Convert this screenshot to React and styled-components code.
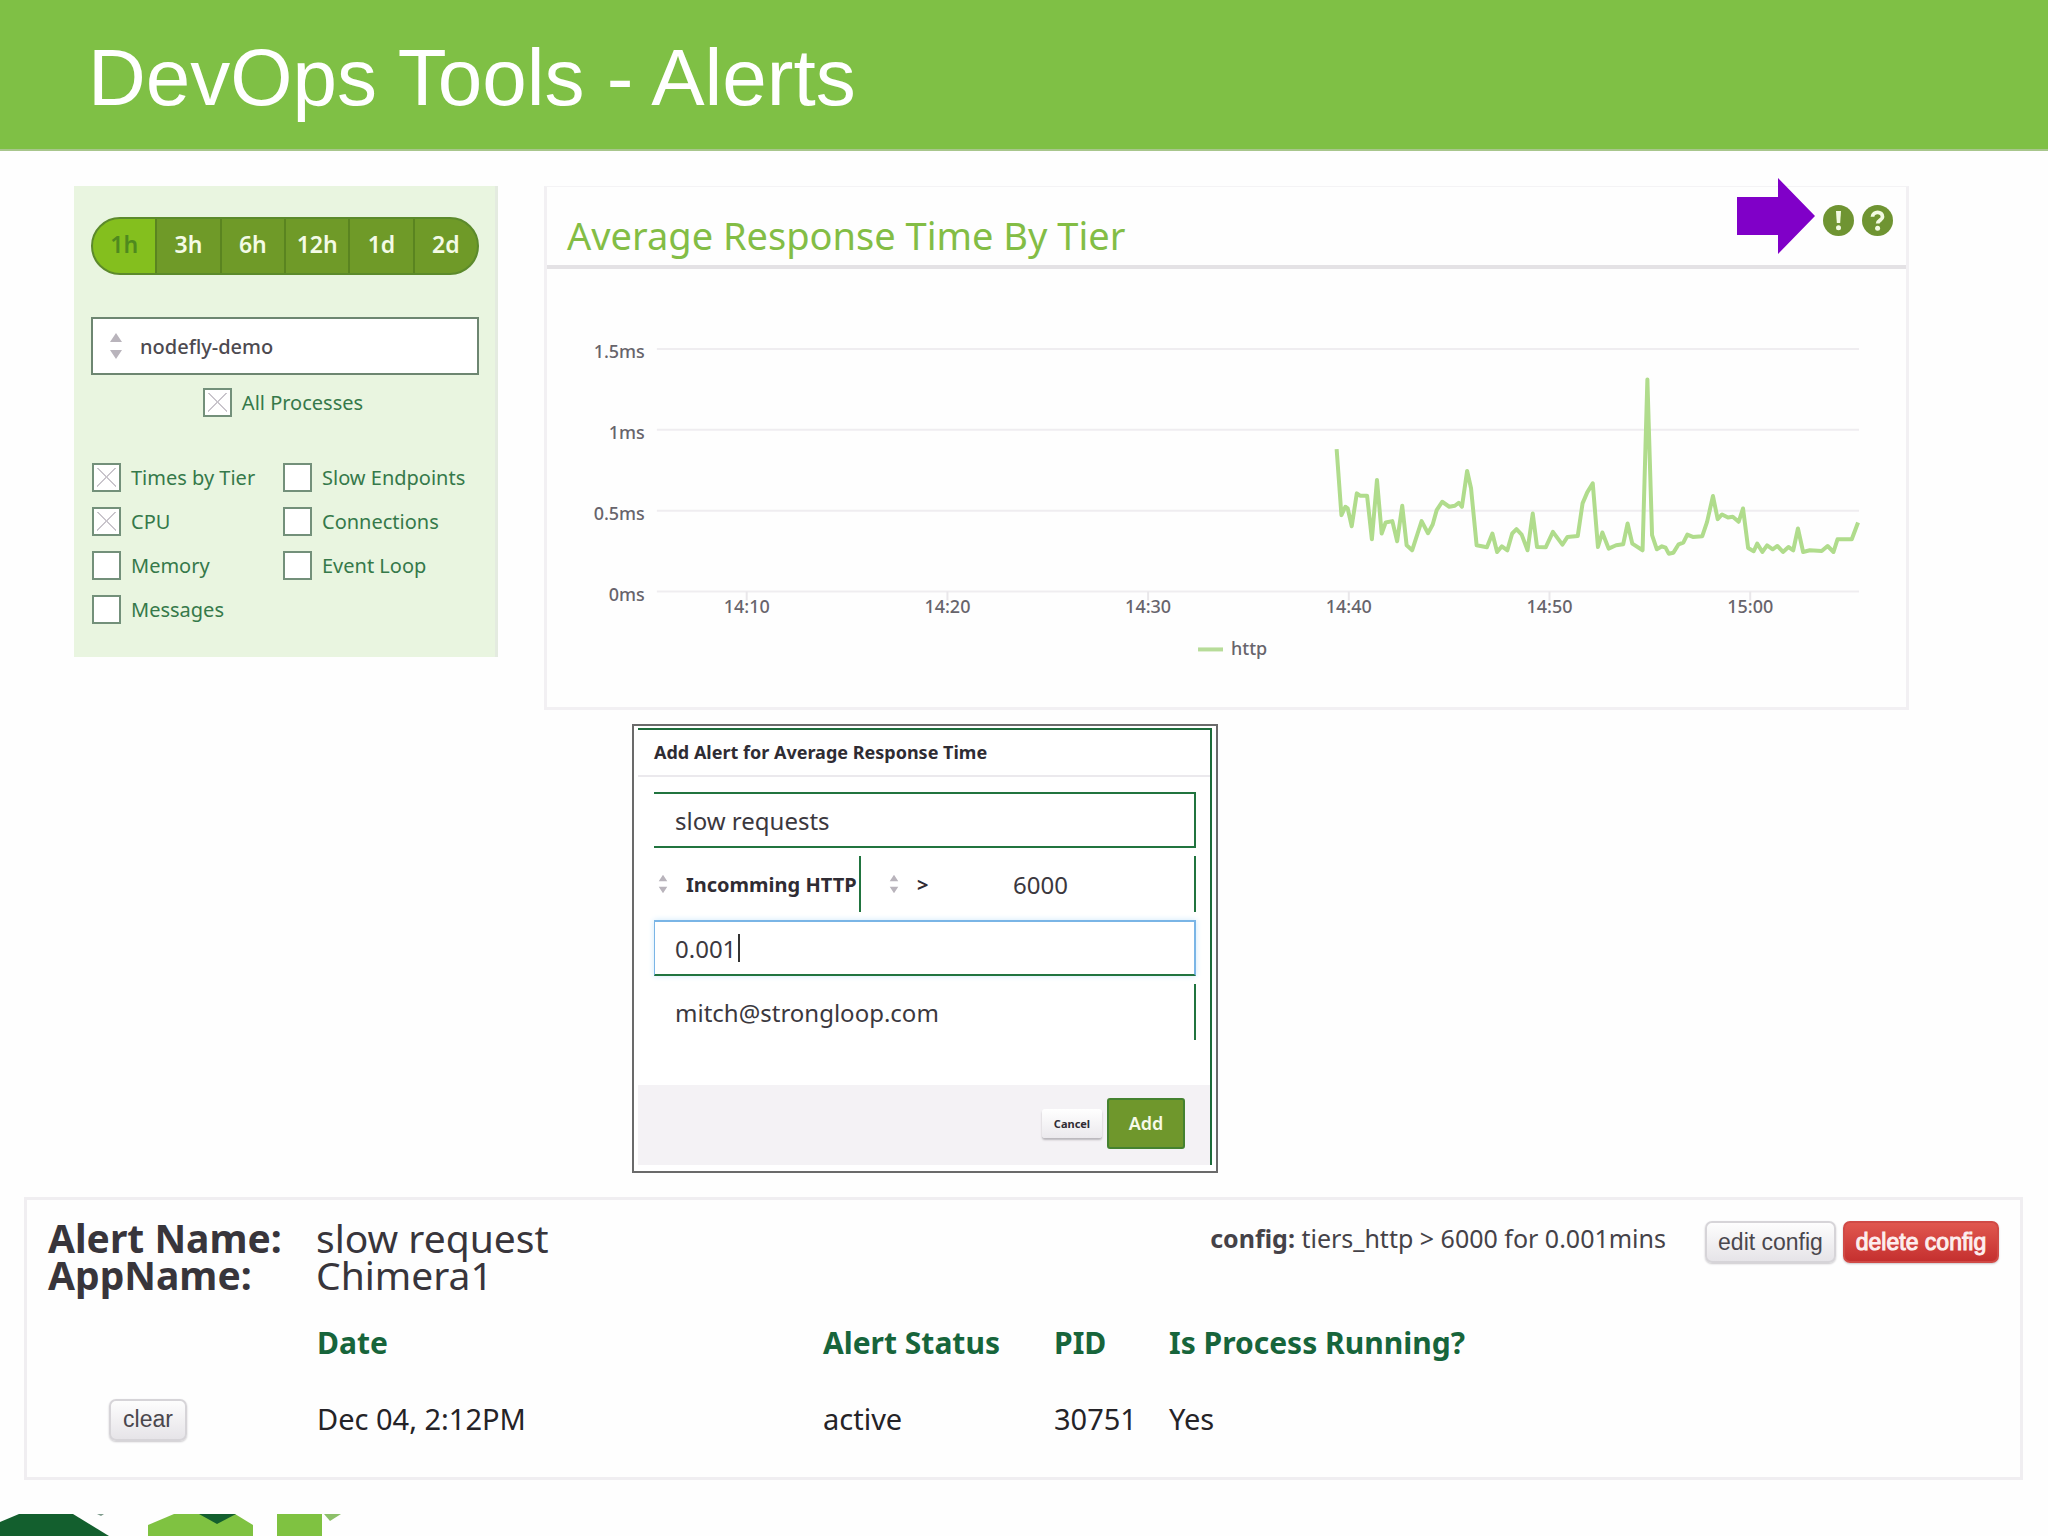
import React from "react";
import styled, { createGlobalStyle, css } from "styled-components";

const ui = '"Noto Sans", "Open Sans", sans-serif';
const plain = '"Liberation Sans", Arial, sans-serif';

const GlobalStyle = createGlobalStyle`
  *, *::before, *::after { box-sizing: border-box; }
  body {
    margin: 0;
    background: #fefefe;
    color: #3d3d3f;
    font-family: ${ui};
  }
  button, input, select { font-family: inherit; margin: 0; }
`;

const Page = styled.div`
  display: flex;
  flex-direction: column;
  min-height: 100vh;
`;

const Banner = styled.header`
  padding: 34px 88px 27px;
  background: #7fc045;
  border-bottom: 2px solid #a8c68c;
`;

const BannerTitle = styled.h1`
  margin: 0;
  font: 400 80px/88px ${plain};
  color: #fff;
`;

const Content = styled.main`
  display: flex;
  flex-direction: column;
  gap: 14px;
  padding: 35px 25px 0 24px;
`;

const Dashboard = styled.section`
  display: flex;
  align-items: flex-start;
  gap: 46px;
  padding: 0 114px 0 50px;
`;

/* Sidebar */

const Sidebar = styled.aside`
  flex: 0 0 424px;
  min-height: 471px;
  padding: 31px 16px 31px 17px;
  background: #e9f5e0;
  border-right: 3px solid #e4ebe0;
`;

const RangeGroup = styled.div`
  display: flex;
  height: 58px;
  overflow: hidden;
  border: 2px solid #5c8a2c;
  border-radius: 29px;
  background: #6f9a28;
`;

const RangeButton = styled.button`
  flex: 1;
  padding: 0 0 4px;
  border: 0;
  border-left: 2px solid #5a8420;
  background: ${(p) => (p.$active ? "#84bf1e" : "transparent")};
  color: ${(p) => (p.$active ? "#4f8a1e" : "#f4fbe6")};
  font-size: 23px;
  font-weight: 600;

  &:first-child { border-left: 0; }
`;

const SelectWrap = styled.div`
  position: relative;
  display: flex;
`;

const SpinIcon = styled.svg`
  position: absolute;
  left: ${(p) => p.$left}px;
  top: 50%;
  width: ${(p) => p.$width}px;
  transform: translateY(-50%);
  fill: #b9b4bc;
  pointer-events: none;
`;

const SidebarSelect = styled.select`
  width: 100%;
  height: 58px;
  padding: 0 0 0 47px;
  appearance: none;
  border: 2px solid #6d8671;
  border-radius: 0;
  background: #fff;
  color: #4d4a50;
  font-size: 20px;
  font-weight: 500;
`;

const SelectSpacer = styled.div`
  margin: 42px 0 13px;
`;

const CheckLabel = styled.label`
  display: flex;
  align-items: center;
  gap: 10px;
  height: 29px;
  color: #35794a;
  font-size: 20px;
  white-space: nowrap;
`;

const Checkbox = styled.input`
  appearance: none;
  flex: none;
  width: 29px;
  height: 29px;
  margin: 0;
  border: 2px solid #73907a;
  background: #fff;

  &:checked {
    background:
      linear-gradient(45deg, transparent 48%, #c9c5cc 48%, #c9c5cc 53%, transparent 53%) center / 19px 19px no-repeat,
      linear-gradient(-45deg, transparent 48%, #c9c5cc 48%, #c9c5cc 53%, transparent 53%) center / 19px 19px no-repeat,
      #fff;
  }
`;

const AllProcesses = styled.div`
  display: flex;
  justify-content: center;
  padding-right: 4px;
`;

const MetricColumns = styled.div`
  display: grid;
  grid-template-columns: 191px 1fr;
  margin-top: 46px;
  padding-left: 1px;
`;

const MetricColumn = styled.div`
  display: flex;
  flex-direction: column;
  gap: 15px;
`;

/* Chart panel */

const ChartPanel = styled.article`
  flex: 1;
  min-width: 0;
  border: 3px solid #f2f0f3;
  border-top: 1px solid #f4f3f5;
`;

const ChartHeader = styled.header`
  display: flex;
  align-items: center;
  justify-content: space-between;
  height: 82px;
  padding: 0 13px 0 20px;
  border-bottom: 4px solid #e4e2e5;
`;

const ChartTitle = styled.h2`
  margin: 18px 0 0;
  color: #83bd45;
  font-size: 38px;
  font-weight: 400;
  line-height: 48px;
`;

const HeaderTools = styled.div`
  display: flex;
  align-items: center;
  gap: 8px;
  margin-top: -20px;
`;

const Arrow = styled.svg`
  width: 78px;
  height: 76px;
`;

const IconButton = styled.button`
  display: flex;
  margin-top: 9px;
  padding: 0;
  border: 0;
  background: none;

  svg { width: 31px; height: 31px; }
`;

const ChartSvg = styled.svg`
  display: block;
  width: 100%;
  height: auto;

  text {
    font: 500 18px ${ui};
    fill: #67646b;
  }
`;

/* Alert dialog */

const Dialog = styled.form`
  width: 586px;
  margin: 0 0 10px 608px;
  padding: 2px 4px 6px;
  border: 2px solid #6a6a6a;
  background: #fff;
`;

const DialogBody = styled.div`
  display: flex;
  flex-direction: column;
  border-top: 2px solid #1d6b3a;
  border-right: 2px solid #1d6b3a;
`;

const DialogTitle = styled.h3`
  margin: 0;
  padding: 0 16px;
  border-bottom: 2px solid #ebe9ed;
  color: #2f2c33;
  font-size: 18px;
  font-weight: 700;
  line-height: 45px;
`;

const Fields = styled.div`
  display: flex;
  flex-direction: column;
  gap: 8px;
  padding: 15px 14px 45px 16px;
`;

const fieldText = css`
  color: #3b383e;
  font-size: 24px;
`;

const Field = styled.input`
  ${fieldText}
  width: 100%;
  height: 56px;
  padding: 0 21px;
  border: solid #21743f;
  border-width: ${(p) => (p.$rightOnly ? "0 2px 0 0" : "2px 2px 2px 0")};
  background: transparent;
  outline: 0;
`;

const FocusedField = styled.div`
  display: flex;
  align-items: center;
  height: 56px;
  padding-left: 20px;
  border: 2px solid #7ab5e6;
  border-left-width: 1px;
  border-bottom-color: #21743f;
  box-shadow: 0 0 6px #cfe9fb;
`;

const FocusedInput = styled.input`
  ${fieldText}
  width: 63px;
  padding: 0;
  border: 0;
  background: transparent;
  outline: 0;
`;

const Caret = styled.span`
  width: 2px;
  height: 28px;
  background: #333;
`;

const ConditionRow = styled.div`
  display: grid;
  grid-template-columns: 207px 131px 1fr;
`;

const FieldSelect = styled.select`
  width: 100%;
  height: 56px;
  padding: 0 0 0 ${(p) => p.$indent}px;
  appearance: none;
  border: 0;
  border-right: ${(p) => (p.$divider ? "2px solid #21743f" : "0")};
  border-radius: 0;
  background: transparent;
  color: #2f2c33;
  font-size: 20px;
  font-weight: 700;
`;

const DialogFooter = styled.footer`
  display: flex;
  align-items: center;
  justify-content: flex-end;
  gap: 5px;
  height: 80px;
  padding: 0 25px 4px;
  background: #f4f2f5;
`;

const CancelButton = styled.button`
  width: 60px;
  height: 29px;
  padding: 0;
  border: 0;
  border-radius: 3px;
  background: linear-gradient(#fff, #ebe9ed);
  box-shadow: 0 2px 2px #b9b6bb;
  color: #2f2c33;
  font-size: 11px;
  font-weight: 700;
`;

const AddButton = styled.button`
  width: 78px;
  height: 51px;
  padding: 0;
  border: 2px solid #45822f;
  border-radius: 3px;
  background: #6f972c;
  color: #f6fae9;
  font-size: 18px;
  font-weight: 600;
`;

/* Alert record */

const AlertPanel = styled.section`
  border: 3px solid #f0eef1;
  padding: 19px 21px 20px 21px;
`;

const AlertTop = styled.div`
  display: flex;
  justify-content: space-between;
  align-items: flex-start;
`;

const AlertNames = styled.dl`
  display: grid;
  grid-template-columns: 268px auto;
  margin: 0;
  color: #38353b;
  font-size: 39px;
  line-height: 37px;

  dt { font-weight: 700; }
  dd { margin: 0; }
`;

const AlertConfig = styled.div`
  display: flex;
  align-items: center;
  gap: 7px;
  margin-top: 2px;
`;

const ConfigText = styled.p`
  margin: 0 32px 8px 0;
  color: #454248;
  font-size: 25px;
  line-height: 34px;
`;

const SmallButton = styled.button`
  width: ${(p) => p.$width}px;
  height: 42px;
  padding: 0;
  border: 2px solid ${(p) => (p.$danger ? "#d04a46" : "#d6d4d8")};
  border-radius: 7px;
  background: ${(p) => (p.$danger ? "linear-gradient(#e0574f, #c5302f)" : "linear-gradient(#fdfdfd, #e6e4e8)")};
  box-shadow: 0 1px 2px #c9c7cb;
  color: ${(p) => (p.$danger ? "#fdeeee" : "#4a474d")};
  font: 400 23px ${plain};
  -webkit-text-stroke: ${(p) => (p.$danger ? "1px #fdeeee" : "0")};
`;

const AlertTable = styled.table`
  width: 100%;
  margin-top: 11px;
  border-collapse: collapse;
  table-layout: fixed;
  font-size: 29px;
  line-height: 36px;

  th, td { padding: 0 0 0 1px; text-align: left; }
  th { height: 77px; color: #17653b; font-size: 30px; font-weight: 700; }
  td { height: 76px; color: #252327; }
  td:first-child { padding-left: 61px; }
  th:first-child { padding: 0; }
`;

const PageFooter = styled.footer`
  display: flex;
  height: 22px;
  margin-top: auto;
`;

/* Chart data: [sample offset, response reading] */
const SERIES = [
  [93, 425], [105, 228], [115, 253], [121, 248], [131, 195], [144, 293], [152, 286], [170, 286],
  [182, 156], [195, 333], [207, 173], [217, 206], [234, 210], [246, 150], [259, 256], [270, 138],
  [284, 123], [308, 210], [324, 174], [336, 200], [346, 243], [360, 268], [378, 253], [392, 256],
  [402, 265], [410, 253], [423, 360], [433, 308], [447, 138], [473, 132], [487, 173], [499, 118],
  [511, 135], [525, 123], [537, 173], [548, 186], [561, 170], [576, 123], [589, 233], [600, 133],
  [622, 132], [640, 178], [664, 140], [677, 163], [703, 166], [715, 263], [727, 296], [741, 323],
  [754, 133], [765, 176], [781, 128], [800, 138], [818, 141], [829, 203], [841, 143], [867, 123],
  [879, 633], [891, 168], [903, 126], [916, 135], [925, 131], [933, 113], [945, 116], [958, 141],
  [970, 146], [980, 170], [994, 163], [1018, 165], [1030, 208], [1045, 285], [1057, 216],
  [1068, 230], [1083, 221], [1095, 223], [1110, 208], [1121, 248], [1134, 130], [1148, 120],
  [1157, 143], [1170, 118], [1182, 138], [1196, 126], [1208, 136], [1222, 118], [1236, 133],
  [1248, 123], [1260, 188], [1273, 118], [1290, 123], [1320, 121], [1335, 136], [1350, 118],
  [1360, 156], [1396, 156], [1412, 206],
];
const BASELINE = 323;
const linePoints = SERIES.map(([x, v]) => `${(754 + x / 2.526).toFixed(1)},${(BASELINE - v / 2.98).toFixed(1)}`).join(" ");

const Y_TICKS = [["1.5ms", 80], ["1ms", 161], ["0.5ms", 242], ["0ms", BASELINE]];
const X_TICKS = ["14:10", "14:20", "14:30", "14:40", "14:50", "15:00"];

function ResponseChart() {
  return (
    <ChartSvg viewBox="0 0 1361 439" role="img" aria-label="Average response time, http">
      {Y_TICKS.map(([label, y]) => (
        <g key={label}>
          <line x1="110" x2="1314" y1={y} y2={y} stroke="#efedf0" strokeWidth="2" />
          <text x="98" y={y + 9} textAnchor="end">{label}</text>
        </g>
      ))}
      {X_TICKS.map((label, i) => {
        const x = 200 + i * 201;
        return (
          <g key={label}>
            <line x1={x} x2={x} y1={BASELINE} y2={BASELINE + 9} stroke="#e9e7ea" strokeWidth="2" />
            <text x={x} y={BASELINE + 22} textAnchor="middle">{label}</text>
          </g>
        );
      })}
      <polyline points={linePoints} fill="none" stroke="#b0dc8c" strokeWidth="4" strokeLinejoin="round" />
      <line x1="652" x2="677" y1="381" y2="381" stroke="#b7dc99" strokeWidth="4" />
      <text x="685" y="387">http</text>
    </ChartSvg>
  );
}

function Spinner({ left, width }) {
  return (
    <SpinIcon $left={left} $width={width} viewBox="0 0 14 26" aria-hidden="true">
      <path d="M7 0 13 9H1zM7 26 13 17H1z" />
    </SpinIcon>
  );
}

function Metric({ label, checked }) {
  return (
    <CheckLabel>
      <Checkbox type="checkbox" defaultChecked={checked} />
      {label}
    </CheckLabel>
  );
}

const RANGES = ["1h", "3h", "6h", "12h", "1d", "2d"];

export default function App() {
  return (
    <Page>
      <GlobalStyle />
      <Banner>
        <BannerTitle>DevOps Tools - Alerts</BannerTitle>
      </Banner>
      <Content>
        <Dashboard>
          <Sidebar>
            <RangeGroup>
              {RANGES.map((r, i) => (
                <RangeButton key={r} type="button" $active={i === 0}>{r}</RangeButton>
              ))}
            </RangeGroup>
            <SelectSpacer>
              <SelectWrap>
                <SidebarSelect aria-label="Application" defaultValue="nodefly-demo">
                  <option>nodefly-demo</option>
                </SidebarSelect>
                <Spinner left={18} width={14} />
              </SelectWrap>
            </SelectSpacer>
            <AllProcesses>
              <Metric label="All Processes" checked />
            </AllProcesses>
            <MetricColumns>
              <MetricColumn>
                <Metric label="Times by Tier" checked />
                <Metric label="CPU" checked />
                <Metric label="Memory" />
                <Metric label="Messages" />
              </MetricColumn>
              <MetricColumn>
                <Metric label="Slow Endpoints" />
                <Metric label="Connections" />
                <Metric label="Event Loop" />
              </MetricColumn>
            </MetricColumns>
          </Sidebar>
          <ChartPanel>
            <ChartHeader>
              <ChartTitle>Average Response Time By Tier</ChartTitle>
              <HeaderTools>
                <Arrow viewBox="0 0 78 76" aria-hidden="true">
                  <path d="M0 19H41V0L78 38 41 76V57H0z" fill="#8000c8" />
                </Arrow>
                <IconButton type="button" aria-label="Alerts">
                  <svg viewBox="0 0 31 31">
                    <circle cx="15.5" cy="15.5" r="15.5" fill="#6f9432" />
                    <path d="M13 6h5l-.8 12h-3.4z" fill="#f3fae3" />
                    <circle cx="15.5" cy="22.8" r="2.5" fill="#f3fae3" />
                  </svg>
                </IconButton>
                <IconButton type="button" aria-label="Help">
                  <svg viewBox="0 0 31 31">
                    <circle cx="15.5" cy="15.5" r="15.5" fill="#6f9432" />
                    <path d="M10.5 11.8c.2-6 10.2-6 10 .2-.1 3.2-4.8 3-4.8 6.6" fill="none" stroke="#f3fae3" strokeWidth="3.8" />
                    <circle cx="15.6" cy="23.2" r="2.5" fill="#f3fae3" />
                  </svg>
                </IconButton>
              </HeaderTools>
            </ChartHeader>
            <ResponseChart />
          </ChartPanel>
        </Dashboard>

        <Dialog onSubmit={(e) => e.preventDefault()}>
          <DialogBody>
            <DialogTitle>Add Alert for Average Response Time</DialogTitle>
            <Fields>
              <Field aria-label="Alert name" defaultValue="slow requests" />
              <ConditionRow>
                <SelectWrap>
                  <FieldSelect $divider $indent={32} aria-label="Metric">
                    <option>Incomming HTTP</option>
                  </FieldSelect>
                  <Spinner left={4} width={10} />
                </SelectWrap>
                <SelectWrap>
                  <FieldSelect $indent={56} aria-label="Comparison">
                    <option>&gt;</option>
                  </FieldSelect>
                  <Spinner left={28} width={10} />
                </SelectWrap>
                <Field $rightOnly aria-label="Threshold" defaultValue="6000" />
              </ConditionRow>
              <FocusedField>
                <FocusedInput aria-label="Duration in minutes" defaultValue="0.001" />
                <Caret />
              </FocusedField>
              <Field $rightOnly type="email" aria-label="Email" defaultValue="mitch@strongloop.com" />
            </Fields>
            <DialogFooter>
              <CancelButton type="button">Cancel</CancelButton>
              <AddButton type="submit">Add</AddButton>
            </DialogFooter>
          </DialogBody>
        </Dialog>

        <AlertPanel>
          <AlertTop>
            <AlertNames>
              <dt>Alert Name:</dt>
              <dd>slow request</dd>
              <dt>AppName:</dt>
              <dd>Chimera1</dd>
            </AlertNames>
            <AlertConfig>
              <ConfigText><b>config:</b> tiers_http &gt; 6000 for 0.001mins</ConfigText>
              <SmallButton type="button" $width={131}>edit config</SmallButton>
              <SmallButton type="button" $width={156} $danger>delete config</SmallButton>
            </AlertConfig>
          </AlertTop>
          <AlertTable>
            <colgroup>
              <col style={{ width: 268 }} />
              <col style={{ width: 506 }} />
              <col style={{ width: 231 }} />
              <col style={{ width: 115 }} />
              <col />
            </colgroup>
            <thead>
              <tr>
                <th aria-label="Action" />
                <th>Date</th>
                <th>Alert Status</th>
                <th>PID</th>
                <th>Is Process Running?</th>
              </tr>
            </thead>
            <tbody>
              <tr>
                <td><SmallButton type="button" $width={78}>clear</SmallButton></td>
                <td>Dec 04, 2:12PM</td>
                <td>active</td>
                <td>30751</td>
                <td>Yes</td>
              </tr>
            </tbody>
          </AlertTable>
        </AlertPanel>
      </Content>
      <PageFooter>
        <svg width="360" height="22" viewBox="0 0 360 22" aria-hidden="true">
          <path d="M0 8 19 0H73L109 22H0z" fill="#135f2e" />
          <path d="M148 22V11L174 0H235L253 11V22z" fill="#7fc241" />
          <path d="M199 0H236L217 10z" fill="#135f2e" />
          <path d="M277 0H322V22H277z" fill="#7fc241" />
          <path d="M324 0H341L330 7z" fill="#8cc069" />
          <path d="M97 0H104L101 2z" fill="#7d9a8b" />
        </svg>
      </PageFooter>
    </Page>
  );
}
